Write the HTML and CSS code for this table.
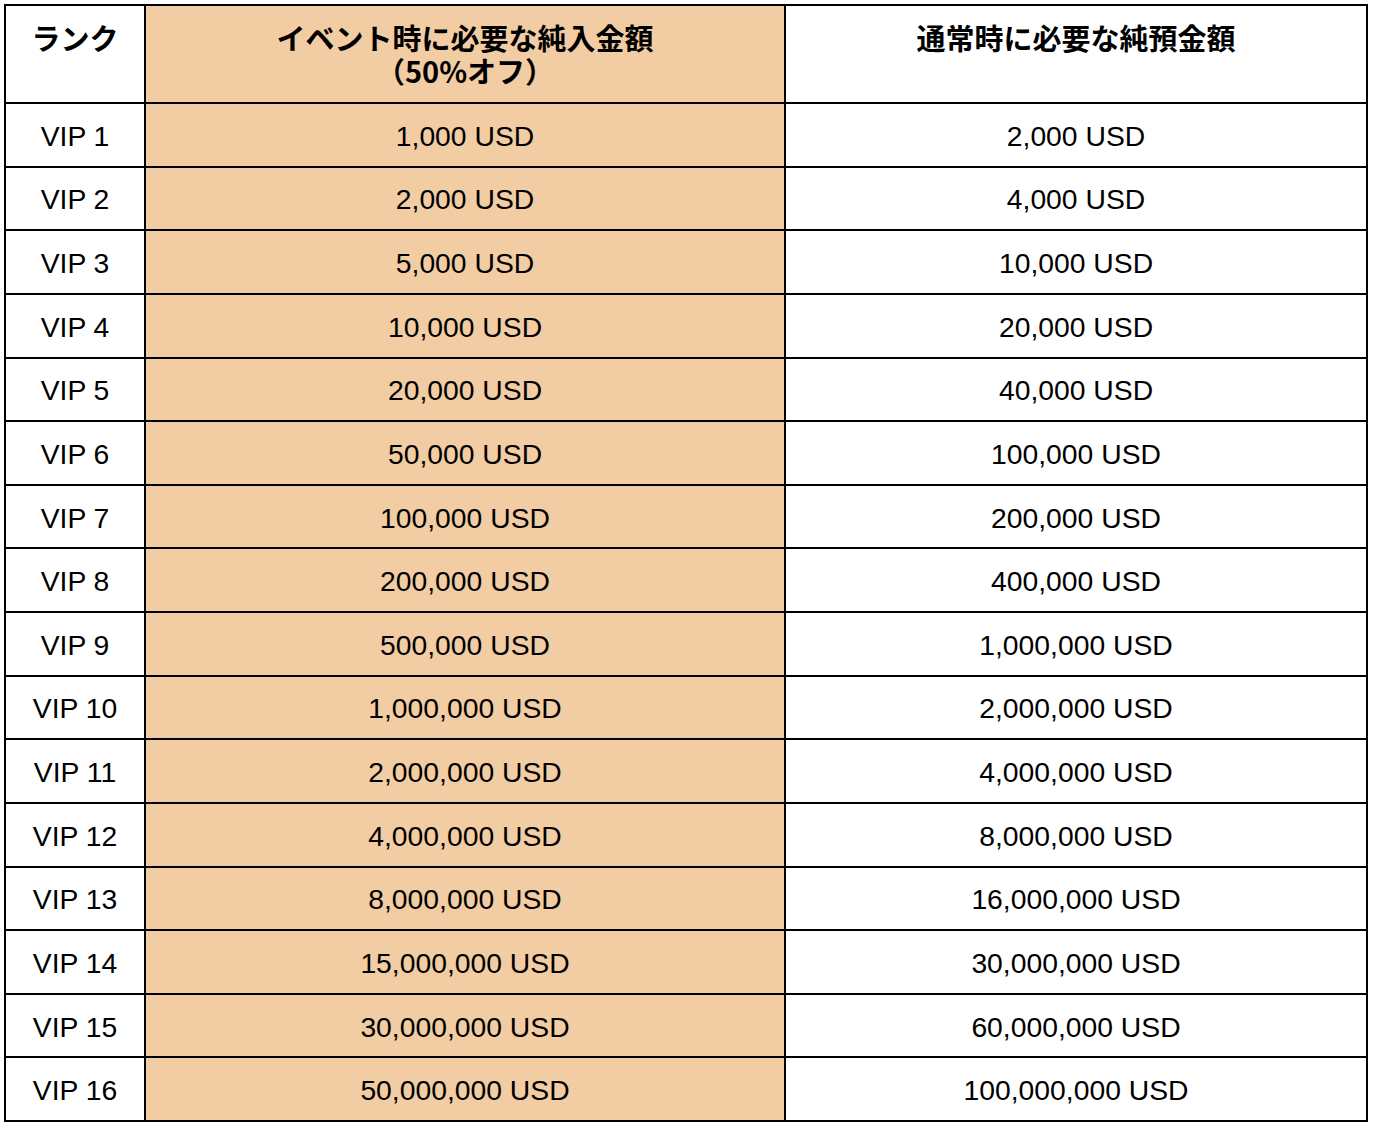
FILE: index.html
```html
<!DOCTYPE html>
<html lang="ja">
<head>
<meta charset="utf-8">
<link rel="stylesheet" href="styles.css">
</head>
<body>
<table class="vip">
  <thead>
    <tr class="head-row">
      <th class="c-rank">ランク</th>
      <th class="c-event">イベント時に必要な純入金額<br>（50%オフ）</th>
      <th class="c-normal">通常時に必要な純預金額</th>
    </tr>
  </thead>
  <tbody>
    <tr><td class="c-rank">VIP 1</td><td class="c-event">1,000 USD</td><td class="c-normal">2,000 USD</td></tr>
    <tr><td class="c-rank">VIP 2</td><td class="c-event">2,000 USD</td><td class="c-normal">4,000 USD</td></tr>
    <tr><td class="c-rank">VIP 3</td><td class="c-event">5,000 USD</td><td class="c-normal">10,000 USD</td></tr>
    <tr><td class="c-rank">VIP 4</td><td class="c-event">10,000 USD</td><td class="c-normal">20,000 USD</td></tr>
    <tr><td class="c-rank">VIP 5</td><td class="c-event">20,000 USD</td><td class="c-normal">40,000 USD</td></tr>
    <tr><td class="c-rank">VIP 6</td><td class="c-event">50,000 USD</td><td class="c-normal">100,000 USD</td></tr>
    <tr><td class="c-rank">VIP 7</td><td class="c-event">100,000 USD</td><td class="c-normal">200,000 USD</td></tr>
    <tr><td class="c-rank">VIP 8</td><td class="c-event">200,000 USD</td><td class="c-normal">400,000 USD</td></tr>
    <tr><td class="c-rank">VIP 9</td><td class="c-event">500,000 USD</td><td class="c-normal">1,000,000 USD</td></tr>
    <tr><td class="c-rank">VIP 10</td><td class="c-event">1,000,000 USD</td><td class="c-normal">2,000,000 USD</td></tr>
    <tr><td class="c-rank">VIP 11</td><td class="c-event">2,000,000 USD</td><td class="c-normal">4,000,000 USD</td></tr>
    <tr><td class="c-rank">VIP 12</td><td class="c-event">4,000,000 USD</td><td class="c-normal">8,000,000 USD</td></tr>
    <tr><td class="c-rank">VIP 13</td><td class="c-event">8,000,000 USD</td><td class="c-normal">16,000,000 USD</td></tr>
    <tr><td class="c-rank">VIP 14</td><td class="c-event">15,000,000 USD</td><td class="c-normal">30,000,000 USD</td></tr>
    <tr><td class="c-rank">VIP 15</td><td class="c-event">30,000,000 USD</td><td class="c-normal">60,000,000 USD</td></tr>
    <tr><td class="c-rank">VIP 16</td><td class="c-event">50,000,000 USD</td><td class="c-normal">100,000,000 USD</td></tr>
  </tbody>
</table>
</body>
</html>
```
FILE: styles.css
```css
html, body {
  margin: 0;
  padding: 0;
  background: #ffffff;
}
body {
  padding: 4px;
  font-family: "Liberation Sans", Arial, "Noto Sans CJK JP", sans-serif;
  color: #000;
}
.vip {
  border-collapse: separate;
  border-spacing: 0;
  border-left: 2px solid #000;
  border-top: 2px solid #000;
  table-layout: fixed;
  width: 1364px;
}
.vip th,
.vip td {
  box-sizing: border-box;
  border-right: 2px solid #000;
  border-bottom: 2px solid #000;
  text-align: center;
  padding: 0;
}
.vip th {
  font-family: "Noto Sans CJK JP", sans-serif;
  font-weight: 700;
  font-size: 29px;
  line-height: 33px;
  vertical-align: top;
  padding-top: 15px;
  height: 98px;
}
.vip td {
  font-size: 28.3px;
  line-height: 32px;
  vertical-align: middle;
  padding-top: 2px;
  height: 63.625px;
}
.vip tbody tr {
  height: 63.625px;
}
.c-rank { width: 140px; }
.c-event { width: 640px; background: #f2cca2; }
.c-normal { width: 582px; }
```
